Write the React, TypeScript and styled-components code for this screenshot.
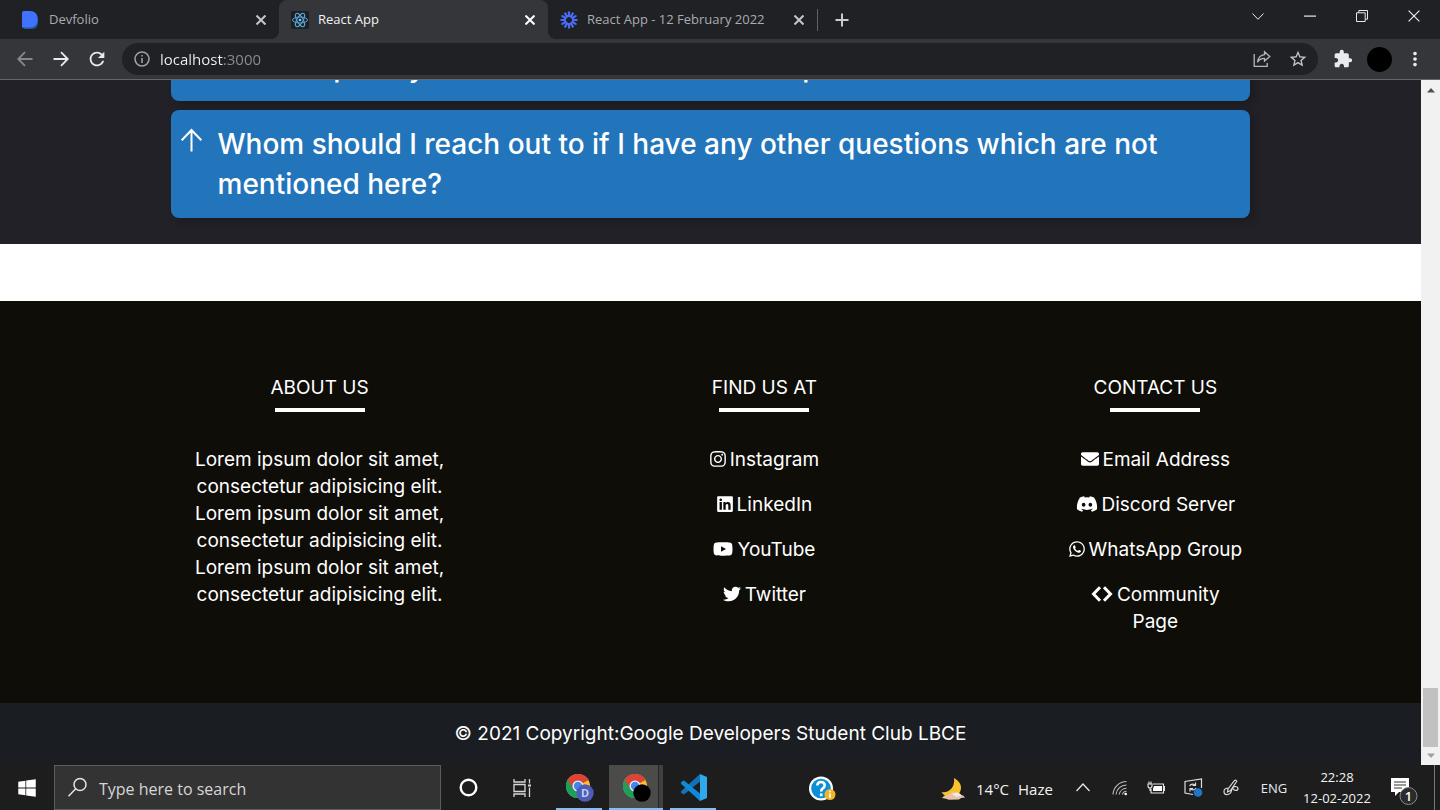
import React from "react";
import styled, { createGlobalStyle } from "styled-components";
import {
  FaInstagram,
  FaLinkedin,
  FaYoutube,
  FaTwitter,
  FaEnvelope,
  FaDiscord,
  FaWhatsapp,
  FaWindows,
} from "react-icons/fa";
import { MdExtension, MdMoreVert, MdStarBorder, MdRefresh } from "react-icons/md";

const uiFont = `"Open Sans", "Noto Sans", sans-serif`;
const siteFont = `Inter, "Liberation Sans", sans-serif`;

const GlobalStyle = createGlobalStyle`
  * { box-sizing: border-box; }
  body { margin: 0; background: #202124; font-family: ${uiFont}; }
  button, input { font-family: inherit; }
  h2, h3, p, ul { margin: 0; padding: 0; font-weight: 400; }
  svg { display: block; flex: none; }
`;

const Desktop = styled.div`
  min-height: 100vh;
  display: flex;
  flex-direction: column;
`;

/* ---------- browser chrome ---------- */

const TabStrip = styled.header`
  display: flex;
  align-items: center;
  height: 39px;
  background: #202124;
`;

const Tab = styled.div<{ $active?: boolean }>`
  position: relative;
  display: flex;
  align-items: center;
  flex: 0 1 269px;
  min-width: 0;
  height: 39px;
  padding: 0 11px 0 12px;
  gap: 9px;
  border-radius: 8px 8px 0 0;
  background: ${(p) => (p.$active ? "#35363a" : "transparent")};
  color: ${(p) => (p.$active ? "#f1f3f4" : "#a9acb1")};
  &:first-child { flex-basis: 279px; padding-left: 20px; }
  &::before, &::after {
    content: "";
    display: ${(p) => (p.$active ? "block" : "none")};
    position: absolute;
    bottom: 0;
    width: 8px;
    height: 8px;
  }
  &::before { left: -8px; background: radial-gradient(circle at 0 0, transparent 8px, #35363a 8px); }
  &::after { right: -8px; background: radial-gradient(circle at 100% 0, transparent 8px, #35363a 8px); }
`;

const TabTitle = styled.span`
  flex: 1;
  min-width: 0;
  overflow: hidden;
  white-space: nowrap;
  padding-bottom: 2px;
  font-size: 13px;
  line-height: 20px;
`;

const IconButton = styled.button<{ $w?: number; $tone?: string }>`
  display: flex;
  align-items: center;
  justify-content: center;
  flex: none;
  width: ${(p) => p.$w ?? 36}px;
  height: 100%;
  padding: 0;
  border: 0;
  background: transparent;
  color: ${(p) => p.$tone ?? "#e8eaed"};
`;

const TabDivider = styled.span`
  width: 1px;
  height: 22px;
  background: #5f6368;
`;

const WindowControls = styled.div`
  display: flex;
  height: 32px;
  align-self: flex-start;
  margin-left: auto;
`;

const Toolbar = styled.nav`
  display: flex;
  align-items: center;
  height: 41px;
  padding: 0 7px;
  background: #35363a;
  border-bottom: 1px solid #65666a;
`;

const AddressBar = styled.div`
  display: flex;
  align-items: center;
  flex: 1;
  height: 32px;
  margin: 0 7px;
  padding: 0 2px 0 12px;
  border-radius: 16px;
  background: #202124;
`;

/* The host is bright and the port is dimmed, by a two-tone fill of the text. */
const UrlInput = styled.input`
  flex: 1;
  min-width: 0;
  height: 32px;
  margin-left: 10px;
  padding: 0 0 1px;
  border: 0;
  outline: 0;
  background: linear-gradient(90deg, #f1f3f4 63px, #8a8d91 63px);
  background-clip: text;
  -webkit-background-clip: text;
  color: transparent;
  font-size: 15px;
`;

const Avatar = styled.span`
  width: 25px;
  height: 25px;
  border-radius: 50%;
  background: #000;
`;

/* ---------- web page ---------- */

const Viewport = styled.div`
  flex: 1;
  display: flex;
`;

const Page = styled.main`
  flex: 1;
  min-width: 0;
  display: flex;
  flex-direction: column;
  overflow: hidden;
  background: #fff;
  font-family: ${siteFont};
`;

const FaqSection = styled.section`
  display: flex;
  flex-direction: column;
  gap: 9px;
  overflow: hidden;
  padding: 0 12% 26px;
  background: #222127;
`;

const FaqCard = styled.button<{ $scrolled?: boolean }>`
  display: flex;
  align-items: flex-start;
  gap: 14px;
  width: 100%;
  margin-top: ${(p) => (p.$scrolled ? "-47px" : "0")};
  padding: 14px 10px;
  border: 0;
  border-radius: 8px;
  background: #2375bb;
  box-shadow: 4px 4px 8px rgba(0, 0, 0, 0.2);
  color: #fff;
  font-size: 28px;
  font-weight: 500;
  line-height: 40px;
  text-align: left;
  svg { margin-top: 4px; }
`;

const Footer = styled.footer`
  flex: 1;
  display: flex;
  flex-direction: column;
  margin-top: 57px;
  background: #0f0d08;
  color: #fff;
  font-size: 19px;
  line-height: 27px;
`;

const FooterColumns = styled.div`
  flex: 1;
  display: grid;
  grid-template-columns: 401fr 490fr 293fr;
  padding: 73px 8.4% 50px;
`;

const Column = styled.section`
  display: flex;
  flex-direction: column;
  align-items: center;
  text-align: center;
`;

const ColumnTitle = styled.h3`
  font-size: 19px;
  line-height: 27px;
`;

const Rule = styled.hr`
  width: 90px;
  height: 4px;
  margin: 7px 0 34px;
  border: 0;
  background: #fff;
`;

const Blurb = styled.p`
  max-width: 290px;
`;

const LinkList = styled.ul`
  max-width: 177px;
  list-style: none;
  li { margin-bottom: 18px; }
`;

const FooterLink = styled.a`
  color: #fff;
  text-decoration: none;
  svg {
    display: inline-block;
    height: 18px;
    margin-right: 4px;
    vertical-align: -2px;
  }
`;

const Copyright = styled.div`
  padding: 17px 16px 18px;
  background: #1a1d21;
  text-align: center;
  font-size: 19px;
  line-height: 27px;
  a { color: #fff; text-decoration: none; }
`;

const ScrollBar = styled.div`
  display: flex;
  flex-direction: column;
  align-items: center;
  justify-content: space-between;
  width: 19px;
  padding: 8px 0 7px;
  background: #f1f1f1;
`;

const ScrollEnd = styled.div`
  display: flex;
  flex-direction: column;
  align-items: center;
  gap: 6px;
`;

const Thumb = styled.div`
  width: 15px;
  height: 59px;
  background: #c1c1c1;
`;

/* ---------- taskbar ---------- */

const Taskbar = styled.footer`
  display: flex;
  align-items: stretch;
  height: 45px;
  background: #1d1d1d;
  color: #f3f3f3;
`;

const SearchBox = styled.label`
  display: flex;
  align-items: center;
  flex: 0 1 387px;
  gap: 11px;
  padding: 0 12px;
  border: 1px solid #5c5c5c;
  background: #333;
  input {
    flex: 1;
    min-width: 0;
    padding: 2px 0 0;
    border: 0;
    outline: 0;
    background: transparent;
    font-size: 16px;
  }
  input::placeholder { color: #d6d6d6; opacity: 1; }
`;

const AppButton = styled.button<{ $current?: boolean }>`
  display: flex;
  align-items: center;
  justify-content: center;
  flex: none;
  width: ${(p) => (p.$current ? 54 : 46)}px;
  margin-left: 7px;
  padding: 2px 0 0;
  border: 0;
  border-bottom: 2px solid #83bdf2;
  background: ${(p) => (p.$current ? "linear-gradient(90deg, #4b4b49 49px, #262626 49px 50px, #3f4044 50px)" : "transparent")};
`;

const Tray = styled.div`
  display: flex;
  margin-left: auto;
`;

const HelpButton = styled(IconButton)`
  margin-right: 98px;
  padding-top: 2px;
`;

const Weather = styled.button`
  display: flex;
  align-items: center;
  gap: 9px;
  width: 124px;
  padding: 2px 0 0;
  border: 0;
  background: transparent;
  color: inherit;
  font-size: 15px;
`;

const Language = styled(IconButton)`
  font-size: 13px;
`;

const Clock = styled.button`
  width: 78px;
  padding: 0;
  border: 0;
  background: transparent;
  color: inherit;
  font-size: 13px;
  line-height: 21px;
  white-space: nowrap;
`;

const NotificationButton = styled(IconButton)`
  padding: 8px 3px 0 0;
`;

const ShowDesktop = styled.button`
  width: 6px;
  padding: 0;
  border: 0;
  border-left: 1px solid #777;
  background: transparent;
`;

/* ---------- drawings ---------- */

const Cross = ({ size = 10, weight = 2 }: { size?: number; weight?: number }) => (
  <svg width={size} height={size} viewBox="0 0 10 10" stroke="currentColor" strokeWidth={weight}>
    <path d="M.5 .5 9.5 9.5M9.5 .5.5 9.5" />
  </svg>
);

const DevfolioLogo = () => (
  <svg width="20" height="20" viewBox="0 0 20 20">
    <path d="M3 3h9a6 6 0 0 1 6 6v4a6 6 0 0 1-6 6H5a2 2 0 0 1-2-2z" fill="#1e5aa0" />
    <path d="M2 3a2 2 0 0 1 2-2h6c5 0 7.500 3 7.500 8s-2.500 8.500-7.500 8.500H2z" fill="#4071ff" />
  </svg>
);

const ReactLogo = () => (
  <svg width="18" height="18" viewBox="0 0 18 18" fill="none" stroke="#57a5dc">
    <rect width="18" height="18" rx="2" fill="#1d1f22" stroke="none" />
    <ellipse cx="9" cy="9" rx="7.500" ry="3" />
    <ellipse cx="9" cy="9" rx="7.500" ry="3" transform="rotate(60 9 9)" />
    <ellipse cx="9" cy="9" rx="7.500" ry="3" transform="rotate(120 9 9)" />
    <circle cx="9" cy="9" r="1.300" fill="#8cc8f0" stroke="none" />
  </svg>
);

const BurstLogo = () => (
  <svg width="18" height="18" viewBox="0 0 18 18" stroke="#4a6cf7" strokeWidth="2.200" strokeLinecap="round">
    {Array.from({ length: 12 }, (_, i) => (
      <path key={i} d="M9 1.300V5" transform={`rotate(${i * 30} 9 9)`} />
    ))}
    <circle cx="9" cy="9" r="4" fill="none" strokeWidth="1.800" />
  </svg>
);

const Arrow = ({ flip }: { flip?: boolean }) => (
  <svg width="16" height="16" viewBox="0 0 16 16" fill="none" stroke="currentColor" strokeWidth="1.800">
    <path d={flip ? "M15.500 8H1.500M8 1.200 1.200 8 8 14.800" : "M.5 8h14M8 1.200 14.800 8 8 14.800"} />
  </svg>
);

const InfoIcon = () => (
  <svg width="16" height="16" viewBox="0 0 16 16" fill="none" stroke="#9aa0a6" strokeWidth="1.600">
    <circle cx="8" cy="8" r="7" />
    <path d="M8 7v5M8 4v1.600" />
  </svg>
);

const ShareIcon = () => (
  <svg width="18" height="18" viewBox="0 0 18 18" fill="none" stroke="#b4b6b9" strokeWidth="1.300">
    <path d="M1.200 4v12.300h13V13" />
    <path d="M11.500 1.800 16.800 6.500 11.500 11V8.300C8.500 8.300 6 9.500 4.500 12.300 5 8 7.500 5 11.500 4.600z" />
  </svg>
);

const UpArrow = () => (
  <svg width="23" height="24" viewBox="0 0 23 24" fill="none" stroke="#fff" strokeWidth="2">
    <path d="M10.500 23.500V1.800M.7 12.300 10.500 2l9.800 10.300" />
  </svg>
);

const CodeIcon = () => (
  <svg width="22" height="18" viewBox="0 0 22 18" fill="none" stroke="#fff" strokeWidth="3">
    <path d="M9 2.200 2.500 9 9 15.800M13 2.200 19.500 9 13 15.800" />
  </svg>
);

const ScrollTip = ({ down }: { down?: boolean }) => (
  <svg width="8" height="5" viewBox="0 0 8 5" fill={down ? "#a0a0a0" : "#505050"}>
    <path d={down ? "M0 .5h8L4 5z" : "M0 4.500h8L4 0z"} />
  </svg>
);

const SearchIcon = () => (
  <svg width="21" height="21" viewBox="0 0 21 21" fill="none" stroke="#e4e4e4" strokeWidth="1.500">
    <circle cx="13" cy="7.500" r="6" />
    <path d="M8.700 11.800 1.500 19.200" />
  </svg>
);

const TaskViewIcon = () => (
  <svg width="19" height="18" viewBox="0 0 19 18" fill="none" stroke="#d8d8d8" strokeWidth="1.300">
    <path d="M1 0v3h11V0M1 18v-3h11v3M1 5.500h11v7H1zM16.500 0v4.500M16.500 8.500V18" />
    <path d="M15 6.500h3" strokeWidth="2" />
  </svg>
);

const ChromeIcon = ({ letter }: { letter?: boolean }) => (
  <svg width="29" height="29" viewBox="0 0 29 29">
    <circle cx="13" cy="13" r="12" fill="#fbc02d" />
    <path d="M13 13 2.600 7A12 12 0 0 1 23.400 7z" fill="#db4437" />
    <path d="M13 13 2.600 7A12 12 0 0 0 13 25z" fill="#1e9e5a" />
    <path d="M13 7.500h10.700A12 12 0 0 0 2.600 7L8.200 15.700z" fill="#db4437" />
    <path d="M2.600 7A12 12 0 0 0 13 25l4.500-8.500-9.300-.5z" fill="#1e9e5a" />
    <circle cx="13" cy="13" r="5.500" fill="#f1f1f1" />
    <circle cx="13" cy="13" r="4.200" fill="#4285f4" />
    <circle cx="20" cy="20" r="8.700" fill={letter ? "#4f5bb5" : "#000"} />
    {letter && (
      <text x="20" y="24" textAnchor="middle" fontSize="11" fontWeight="700" fontFamily="Open Sans, sans-serif" fill="#b9d3f5">D</text>
    )}
  </svg>
);

const CodeEditorIcon = () => (
  <svg width="27" height="27" viewBox="0 0 27 27">
    <path d="M20 0v7.500L4 20.500 1.500 19.300Q0 18 1.500 16.700z" fill="#1272b8" />
    <path d="M20 27v-7.500L4 6.500 1.500 7.700Q0 9 1.500 10.300z" fill="#0f8ad6" />
    <path d="M20 0l7 3v21l-7 3z" fill="#2fa8ec" />
  </svg>
);

const HelpIcon = () => (
  <svg width="27" height="26" viewBox="0 0 27 26">
    <circle cx="12" cy="12.500" r="12" fill="#fff" />
    <circle cx="12" cy="12.500" r="9.800" fill="#0d8fd8" />
    <path d="M8.300 9.500Q8.500 6 12 6t3.700 3.300Q15.700 11.500 13.500 12.700 12.200 13.500 12.200 15.500M12.200 17.500v2.700" fill="none" stroke="#fff" strokeWidth="2.600" />
    <circle cx="21" cy="18.500" r="5.500" fill="#f0b429" />
    <path d="M21 17.500v4.500M21 14.800v1.500" stroke="#fff" strokeWidth="1.600" />
  </svg>
);

const MoonIcon = () => (
  <svg width="27" height="24" viewBox="0 0 27 24">
    <path d="M14 1c8 4 9 12 4 16.500C12 22 4 20 1.500 15 8 16.500 15.500 11 14 1z" fill="#fbc02d" />
    <path d="M2 21q2-3 6-3 4-4.500 9-1.500 2-1 4 1.500 3 0 4 2.500l-4 .5-2 1.500-10 .3-3-1z" fill="#e6c4a8" />
    <path d="M12 17q4-3 8-.3l2 2-6 1z" fill="#efe9e4" />
  </svg>
);

const WifiIcon = () => (
  <svg width="16" height="16" viewBox="0 0 16 16" fill="none" stroke="#bdbdbd" strokeWidth="1.100">
    <path d="M1 14.500A13.500 13.500 0 0 1 14.500 1.500M4 14.500A10.500 10.500 0 0 1 14.500 5M7.200 14.500A7.500 7.500 0 0 1 14.500 8.300M10.300 14.500a4.500 4.500 0 0 1 4.200-3.300" />
    <circle cx="13.700" cy="14" r="1.300" fill="#fff" stroke="none" />
  </svg>
);

const BatteryIcon = () => (
  <svg width="18" height="14" viewBox="0 0 18 14" fill="none" stroke="#e4e4e4" strokeWidth="1.100">
    <path d="M6 3h10.500v9H4V8M16.500 5.500h1v4h-1M1 3h4v2Q5 7 3 7T1 5zM2 3V.5M4 3V.5M3 7v3" />
    <path d="M7 5h8v5H6V7.500z" fill="#fff" stroke="none" />
  </svg>
);

const SyncIcon = () => (
  <svg width="19" height="19" viewBox="0 0 19 19" fill="none" stroke="#dcdcdc" strokeWidth="1.200">
    <path d="M9 16.500 1 15V3.500L17.500 1v9" />
    <path d="M5.500 8q2-3 5.500-1M11.500 4.500V7.500H8.500M12 10q-2 3-5.500 1M6 13.500v-3h3" />
    <circle cx="14" cy="14.500" r="4.300" fill="#1f76c8" stroke="none" />
  </svg>
);

const PenIcon = () => (
  <svg width="16" height="17" viewBox="0 0 16 17" fill="none" stroke="#dcdcdc" strokeWidth="1.200">
    <path d="M5 10 11.500 1.500q1.500-1 2.300.8L7.500 11.500 4.500 13zM5.500 9Q1 9 1 12.500T4.500 15.500Q8 15 8.500 11.500T12 7.500q3 0 3 2t-2.500 2q-2-.5-2.500-2" />
  </svg>
);

const NotificationIcon = () => (
  <svg width="28" height="29" viewBox="0 0 28 29">
    <path d="M1 1h18v14H9l-4 4v-4H1z" fill="#fff" />
    <path d="M4 5h12M4 8h12M4 11h8" stroke="#333" strokeWidth="1" />
    <circle cx="18.500" cy="19" r="8.500" fill="#2b2b2b" stroke="#888" />
    <text x="18.500" y="24" textAnchor="middle" fontSize="13" fontWeight="600" fontFamily="Open Sans, sans-serif" fill="#fff">1</text>
  </svg>
);

/* ---------- content ---------- */

const tabs = [
  { title: "Devfolio", icon: <DevfolioLogo /> },
  { title: "React App", icon: <ReactLogo />, active: true },
  { title: "React App - 12 February 2022", icon: <BurstLogo /> },
];

const findUs = [
  { label: "Instagram", icon: <FaInstagram size={16} viewBox="0 0 448 512" /> },
  { label: "LinkedIn", icon: <FaLinkedin size={16} /> },
  { label: "YouTube", icon: <FaYoutube size={20} /> },
  { label: "Twitter", icon: <FaTwitter size={18} /> },
];

const contact = [
  { label: "Email Address", icon: <FaEnvelope size={18} /> },
  { label: "Discord Server", icon: <FaDiscord size={22} /> },
  { label: "WhatsApp Group", icon: <FaWhatsapp size={16} /> },
  { label: "Community Page", icon: <CodeIcon /> },
];

const Links = ({ items }: { items: { label: string; icon: React.ReactNode }[] }) => (
  <LinkList>
    {items.map((item) => (
      <li key={item.label}>
        <FooterLink href="#">
          {item.icon}
          {item.label}
        </FooterLink>
      </li>
    ))}
  </LinkList>
);

export default function App() {
  return (
    <Desktop>
      <GlobalStyle />
      <TabStrip>
        {tabs.map((tab) => (
          <Tab key={tab.title} $active={tab.active}>
            {tab.icon}
            <TabTitle>{tab.title}</TabTitle>
            <IconButton $w={14} $tone={tab.active ? "#fff" : "#c4c7c9"} aria-label="Close tab">
              <Cross />
            </IconButton>
          </Tab>
        ))}
        <TabDivider />
        <IconButton $w={48} $tone="#c9cbcd" aria-label="New tab">
          <svg width="14" height="14" viewBox="0 0 14 14" stroke="currentColor" strokeWidth="2">
            <path d="M7 .5v13M.5 7h13" />
          </svg>
        </IconButton>
        <WindowControls>
          <IconButton $w={52} aria-label="Search tabs">
            <svg width="12" height="7" viewBox="0 0 12 7" fill="none" stroke="currentColor">
              <path d="M.5 .5 6 6.300 11.500 .5" />
            </svg>
          </IconButton>
          <IconButton $w={52} aria-label="Minimize">
            <svg width="12" height="2" viewBox="0 0 12 2" fill="currentColor">
              <path d="M0 .5h12v1.200H0z" />
            </svg>
          </IconButton>
          <IconButton $w={52} aria-label="Restore">
            <svg width="12" height="12" viewBox="0 0 12 12" fill="none" stroke="currentColor">
              <path d="M.5 2.800h8.700v8.700H.5zM2.800 2.500V.5h8.700v8.700h-2" />
            </svg>
          </IconButton>
          <IconButton $w={52} aria-label="Close window">
            <Cross size={12} weight={1} />
          </IconButton>
        </WindowControls>
      </TabStrip>

      <Toolbar>
        <IconButton $tone="#85878b" aria-label="Back">
          <Arrow flip />
        </IconButton>
        <IconButton aria-label="Forward">
          <Arrow />
        </IconButton>
        <IconButton aria-label="Reload">
          <MdRefresh size={22} />
        </IconButton>
        <AddressBar>
          <InfoIcon />
          <UrlInput aria-label="Address" defaultValue="localhost:3000" />
          <IconButton $tone="#b4b6b9" aria-label="Share">
            <ShareIcon />
          </IconButton>
          <IconButton $tone="#c4c6c9" aria-label="Bookmark">
            <MdStarBorder size={20} />
          </IconButton>
        </AddressBar>
        <IconButton aria-label="Extensions">
          <MdExtension size={20} />
        </IconButton>
        <IconButton aria-label="Profile">
          <Avatar />
        </IconButton>
        <IconButton aria-label="Menu">
          <MdMoreVert size={22} />
        </IconButton>
      </Toolbar>

      <Viewport>
        <Page>
          <FaqSection>
            <FaqCard $scrolled>
              <UpArrow />
              <span>Should I put my name and email on the first post?</span>
            </FaqCard>
            <FaqCard>
              <UpArrow />
              <span>
                Whom should I reach out to if I have any other questions which are not mentioned here?
              </span>
            </FaqCard>
          </FaqSection>
          <Footer>
            <FooterColumns>
              <Column>
                <ColumnTitle>ABOUT US</ColumnTitle>
                <Rule />
                <Blurb>
                  Lorem ipsum dolor sit amet, consectetur adipisicing elit. Lorem ipsum dolor sit amet,
                  consectetur adipisicing elit. Lorem ipsum dolor sit amet, consectetur adipisicing elit.
                </Blurb>
              </Column>
              <Column>
                <ColumnTitle>FIND US AT</ColumnTitle>
                <Rule />
                <Links items={findUs} />
              </Column>
              <Column>
                <ColumnTitle>CONTACT US</ColumnTitle>
                <Rule />
                <Links items={contact} />
              </Column>
            </FooterColumns>
            <Copyright>
              © 2021 Copyright:<a href="#">Google Developers Student Club LBCE</a>
            </Copyright>
          </Footer>
        </Page>
        <ScrollBar>
          <ScrollTip />
          <ScrollEnd>
            <Thumb />
            <ScrollTip down />
          </ScrollEnd>
        </ScrollBar>
      </Viewport>

      <Taskbar>
        <IconButton $w={54} $tone="#fff" aria-label="Start">
          <FaWindows size={20} />
        </IconButton>
        <SearchBox>
          <SearchIcon />
          <input type="search" placeholder="Type here to search" aria-label="Search" />
        </SearchBox>
        <IconButton $w={54} aria-label="Cortana">
          <svg width="19" height="19" viewBox="0 0 19 19" fill="none" stroke="#fff" strokeWidth="2.400">
            <circle cx="9.500" cy="9.500" r="7.800" />
          </svg>
        </IconButton>
        <IconButton $w={54} aria-label="Task view">
          <TaskViewIcon />
        </IconButton>
        <AppButton aria-label="Chrome">
          <ChromeIcon letter />
        </AppButton>
        <AppButton $current aria-label="Chrome, current window">
          <ChromeIcon />
        </AppButton>
        <AppButton aria-label="Code editor">
          <CodeEditorIcon />
        </AppButton>
        <Tray>
          <HelpButton $w={40} aria-label="Help">
            <HelpIcon />
          </HelpButton>
          <Weather>
            <MoonIcon />
            <span>14°C</span>
            <span>Haze</span>
          </Weather>
          <IconButton $w={38} aria-label="Show hidden icons">
            <svg width="14" height="9" viewBox="0 0 14 9" fill="none" stroke="currentColor" strokeWidth="1.200">
              <path d="M.5 8 7 1l6.500 7" />
            </svg>
          </IconButton>
          <IconButton aria-label="Network">
            <WifiIcon />
          </IconButton>
          <IconButton aria-label="Battery">
            <BatteryIcon />
          </IconButton>
          <IconButton $w={38} aria-label="Sync">
            <SyncIcon />
          </IconButton>
          <IconButton $w={38} aria-label="Pen">
            <PenIcon />
          </IconButton>
          <Language $w={48}>ENG</Language>
          <Clock>
            22:28
            <br />
            12-02-2022
          </Clock>
          <NotificationButton $w={58} aria-label="Notifications">
            <NotificationIcon />
          </NotificationButton>
          <ShowDesktop aria-label="Show desktop" />
        </Tray>
      </Taskbar>
    </Desktop>
  );
}
